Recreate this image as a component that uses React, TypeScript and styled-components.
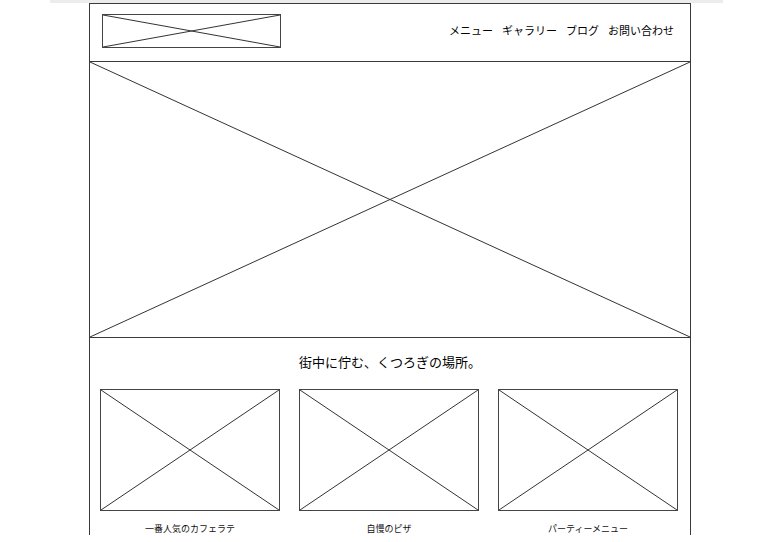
import styled, { createGlobalStyle } from "styled-components";

const GlobalStyle = createGlobalStyle`
  html, body {
    margin: 0;
    padding: 0;
    background: #fff;
  }
  body {
    font-family: "Noto Sans CJK JP", "Noto Sans", sans-serif;
    color: #1e1e1e;
  }
`;

const Page = styled.div`
  width: 773px;
  height: 542px;
  overflow: hidden;
`;

const TopStrip = styled.div`
  height: 3px;
  margin: 0 50px;
  background: #ececec;
`;

const Frame = styled.div`
  box-sizing: border-box;
  width: 602px;
  margin-left: 89px;
  border: 1px solid #3a3a3a;
  border-bottom: none;
`;

const Header = styled.header`
  box-sizing: border-box;
  height: 58px;
  display: flex;
  align-items: center;
  justify-content: space-between;
  padding: 0 16px 3px 12px;
  border-bottom: 1px solid #3a3a3a;
`;

const Nav = styled.nav`
  display: flex;
  gap: 9px;
  font-size: 11px;
  line-height: 14px;
  color: #000;
  margin-bottom: 3px;
`;

const NavItem = styled.a`
  color: inherit;
  text-decoration: none;
`;

const Box = styled.div<{ $w?: number; $h: number }>`
  box-sizing: border-box;
  width: ${(p) => (p.$w ? `${p.$w}px` : "100%")};
  height: ${(p) => p.$h}px;
  border: 1px solid #444;
  & > svg {
    display: block;
    width: 100%;
    height: 100%;
  }
`;

const Hero = styled.div`
  height: 275px;
  border-bottom: 1px solid #3a3a3a;
  & > svg {
    display: block;
    width: 100%;
    height: 100%;
  }
`;

const Section = styled.section`
  padding: 14px 10px 0 10px;
`;

const Tagline = styled.h2`
  margin: 0;
  font-size: 13px;
  font-weight: 400;
  line-height: 19px;
  text-align: center;
  color: #000;
`;

const Cards = styled.div`
  display: grid;
  grid-template-columns: repeat(3, 180px);
  justify-content: space-between;
  margin-top: 18px;
  padding-right: 2px;
`;

const Card = styled.div`
  display: flex;
  flex-direction: column;
  align-items: center;
`;

const Caption = styled.p`
  margin: 11px 0 0;
  font-size: 9px;
  line-height: 13px;
  color: #111;
`;

const Cross = () => (
  <svg viewBox="0 0 100 100" preserveAspectRatio="none">
    <line x1="0" y1="0" x2="100" y2="100" stroke="#333" strokeWidth="1" vectorEffect="non-scaling-stroke" />
    <line x1="100" y1="0" x2="0" y2="100" stroke="#333" strokeWidth="1" vectorEffect="non-scaling-stroke" />
  </svg>
);

const navItems = ["メニュー", "ギャラリー", "ブログ", "お問い合わせ"];
const cards = ["一番人気のカフェラテ", "自慢のピザ", "パーティーメニュー"];

const App = () => (
  <Page>
    <GlobalStyle />
    <TopStrip />
    <Frame>
      <Header>
        <Box $w={179} $h={34}>
          <Cross />
        </Box>
        <Nav>
          {navItems.map((item) => (
            <NavItem key={item} href="#">
              {item}
            </NavItem>
          ))}
        </Nav>
      </Header>
      <Hero>
        <Cross />
      </Hero>
      <Section>
        <Tagline>街中に佇む、くつろぎの場所。</Tagline>
        <Cards>
          {cards.map((c) => (
            <Card key={c}>
              <Box $h={122}>
                <Cross />
              </Box>
              <Caption>{c}</Caption>
            </Card>
          ))}
        </Cards>
      </Section>
    </Frame>
  </Page>
);

export default App;
